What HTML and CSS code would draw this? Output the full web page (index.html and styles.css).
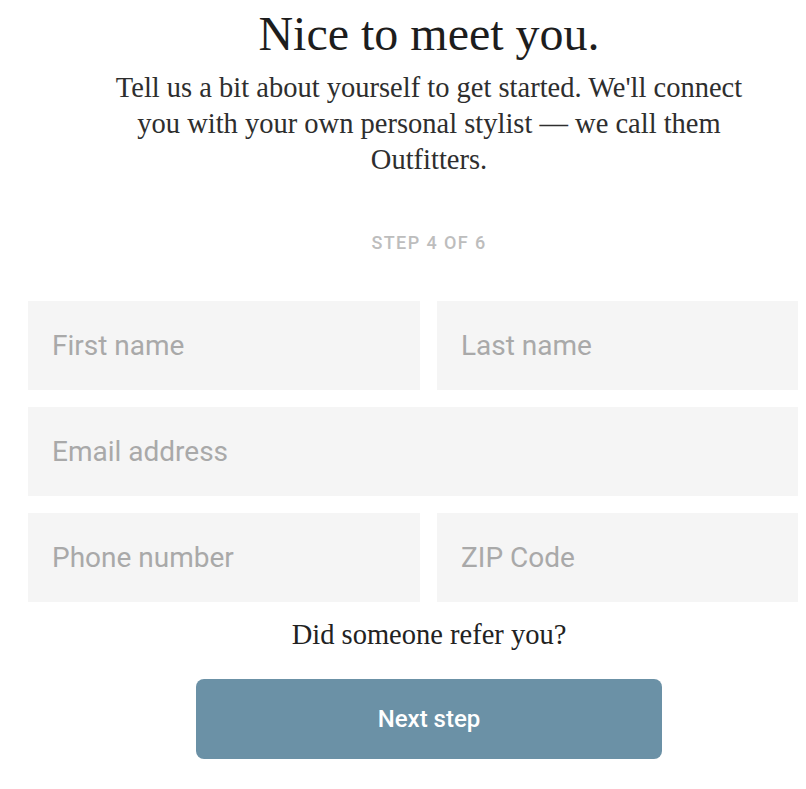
FILE: index.html
```html
<!DOCTYPE html>
<html lang="en">
<head>
<meta charset="utf-8">
<title>Nice to meet you</title>
<link rel="stylesheet" href="styles.css">
</head>
<body>
<main class="page">
  <header class="intro">
    <h1 class="title">Nice to meet you.</h1>
    <p class="lead">Tell us a bit about yourself to get started. We'll connect you with your own personal stylist — we call them Outfitters.</p>
  </header>
  <p class="step">STEP 4 OF 6</p>
  <form class="form">
    <div class="grid">
      <input class="field" type="text" placeholder="First name">
      <input class="field" type="text" placeholder="Last name">
      <input class="field field-wide" type="email" placeholder="Email address">
      <input class="field" type="tel" placeholder="Phone number">
      <input class="field" type="text" placeholder="ZIP Code">
    </div>
    <p class="refer">Did someone refer you?</p>
    <button class="next" type="button">Next step</button>
  </form>
</main>
</body>
</html>
```

FILE: styles.css
```css
html, body {
  margin: 0;
  padding: 0;
  background: #ffffff;
  overflow: hidden;
}

.page {
  width: 802px;
  margin-left: 28px;
  display: flex;
  flex-direction: column;
  align-items: center;
  font-family: "Liberation Serif", "Times New Roman", serif;
  color: #222222;
}

.intro {
  text-align: center;
  width: 650px;
}

.title {
  margin: 8px 0 0;
  font-size: 48px;
  font-weight: 400;
  line-height: 52px;
  color: #1d1d1d;
}

.lead {
  margin: 10px 0 0;
  font-size: 28.5px;
  line-height: 36px;
  color: #2e2e2e;
}

.step {
  margin: 55px 0 0;
  font-family: Roboto, "Liberation Sans", sans-serif;
  font-weight: 500;
  font-size: 18px;
  letter-spacing: 1.4px;
  color: #bdbdbd;
  line-height: 20px;
}

.form {
  width: 100%;
  display: flex;
  flex-direction: column;
  align-items: center;
}

.grid {
  align-self: flex-start;
  width: 770px;
  margin-top: 48px;
  display: grid;
  grid-template-columns: 392px 1fr;
  gap: 17px;
}

.field {
  box-sizing: border-box;
  height: 89px;
  border: 0;
  margin: 0;
  padding: 0 24px;
  background: #f5f5f5;
  font-family: Roboto, "Liberation Sans", sans-serif;
  font-size: 28px;
  color: #333333;
  outline: none;
  width: 100%;
}

.field::placeholder {
  color: #a9a9a9;
}

.field-wide {
  grid-column: 1 / -1;
}

.refer {
  margin: 15px 0 0;
  font-size: 28.5px;
  line-height: 36px;
  color: #222222;
}

.next {
  margin-top: 26px;
  width: 466px;
  height: 80px;
  border: 0;
  border-radius: 8px;
  background: #6b91a6;
  color: #ffffff;
  font-family: Roboto, "Liberation Sans", sans-serif;
  font-weight: 500;
  font-size: 24px;
  cursor: pointer;
}
```
